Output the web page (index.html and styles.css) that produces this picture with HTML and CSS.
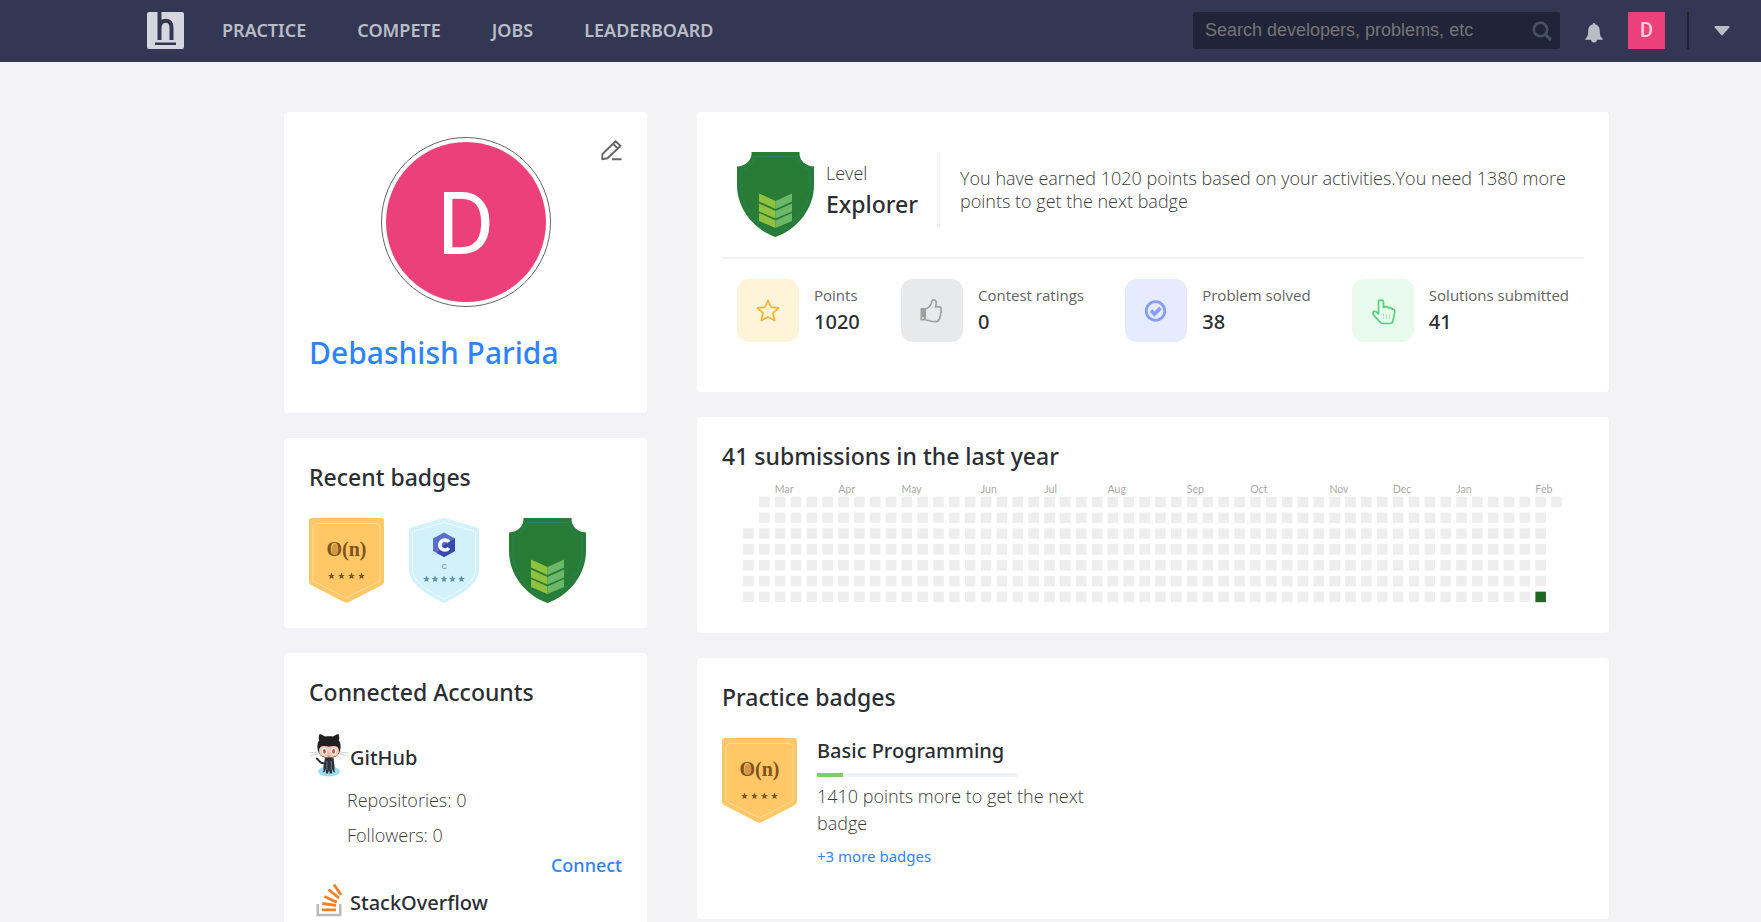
FILE: index.html
```html
<!DOCTYPE html>
<html lang="en">
<head>
<meta charset="utf-8">
<meta name="viewport" content="width=device-width, initial-scale=1">
<title>Debashish Parida | Developer profile</title>
<link rel="stylesheet" href="styles.css">
</head>
<body>
<svg class="defs" width="0" height="0" aria-hidden="true">
  <defs>
    <path id="star5" d="M0-3.4 1-1.1 3.4-1 1.5.6 2.1 3 0 1.7-2.1 3-1.5.6-3.4-1-1-1.1Z"/>
    <symbol id="badge-basic" viewBox="0 0 75 85">
      <path fill="#ffc766" d="M3 0H72Q75 0 75 3V64Q75 66 73 67L40 84Q37.500 85.500 35 84L2 67Q0 66 0 64V3Q0 0 3 0Z"/>
      <path fill="none" stroke="#ffdb9c" d="M8 5.500H67Q71 5.500 71 10V63L37.500 80 4 63V10Q4 5.500 8 5.500Z"/>
      <text x="37.500" y="38" text-anchor="middle" class="badge-serif">O(n)</text>
      <ellipse cx="26" cy="31.500" rx="3.500" ry="5.500" fill="#d6953f"/>
      <g fill="#80531e"><use href="#star5" x="22.500" y="58"/><use href="#star5" x="32.500" y="58"/><use href="#star5" x="42.500" y="58"/><use href="#star5" x="52.500" y="58"/></g>
    </symbol>
    <symbol id="badge-explorer" viewBox="0 0 77 85">
      <path fill="#287c35" d="M14.500 0H62.500C62 8 68 14 77 14.500V33C77 56 61 77 38.500 85 16 77 0 56 0 33V14.500C9 14 15 8 14.500 0Z"/>
      <path fill="none" stroke="#22855a" d="M17 4.500H60Q62 16 73 18V34C73 54 58 73 38.500 81 19 73 4 54 4 34V18Q15 16 17 4.500Z"/>
      <path fill="#91c13e" d="M22 41.500 38.500 49V57L22 49.500ZM22 51.500 38.500 59V66.500L22 59.500ZM22 61 38.500 68.500V76L22 69Z"/>
      <path fill="#6bb868" d="M55 41.500 38.500 49V57L55 49.500ZM55 51.500 38.500 59V66.500L55 59.500ZM55 61 38.500 68.500V76L55 69Z"/>
    </symbol>
  </defs>
</svg>

<header class="topbar">
  <a class="logo" href="#" aria-label="Home">
    <svg viewBox="0 0 37 37" aria-hidden="true">
      <rect width="37" height="37" rx="2" fill="#d6d7de"/>
      <path fill="none" stroke="#333754" stroke-width="4" d="M12.500 0V28M12.500 17C12.500 11 15 8.800 18.500 8.800 23 8.800 24.500 11.500 24.500 16V28"/>
      <path fill="#333754" d="M8 30.500H29V33H8Z"/>
    </svg>
  </a>
  <nav class="mainnav" aria-label="Main">
    <a href="#">PRACTICE</a>
    <a href="#">COMPETE</a>
    <a href="#">JOBS</a>
    <a href="#">LEADERBOARD</a>
  </nav>
  <form class="search" role="search">
    <input type="search" aria-label="Search" placeholder="Search developers, problems, etc">
    <button type="submit" aria-label="Submit search">
      <svg viewBox="0 0 20 20" aria-hidden="true"><circle cx="8.500" cy="8.500" r="6.700" fill="none" stroke="#475160" stroke-width="2.600"/><path d="M13.300 13.300 18 18" stroke="#475160" stroke-width="3.200" stroke-linecap="round"/></svg>
    </button>
  </form>
  <button class="bell" type="button" aria-label="Notifications">
    <svg viewBox="0 0 18 20" aria-hidden="true"><path fill="#b9bdc5" d="M9 0C9.800 0 10.300.6 10.300 1.400 13.500 2 14.800 4.800 14.800 8 14.800 12.500 15.700 14 17.800 16V16.700H.2V16C2.300 14 3.200 12.500 3.200 8 3.200 4.800 4.500 2 7.700 1.400 7.700.6 8.200 0 9 0ZM6 16.500H12C12 18.500 10.700 19.500 9 19.500 7.300 19.500 6 18.500 6 16.500Z"/></svg>
  </button>
  <a class="me" href="#" aria-label="My profile">D</a>
  <button class="more" type="button" aria-label="Account menu">
    <svg viewBox="0 0 16 10" aria-hidden="true"><path fill="#b9bdc5" d="M1 0H15Q16 .5 15.300 1.500L8.800 9Q8 9.800 7.200 9L.7 1.500Q0 .5 1 0Z"/></svg>
  </button>
</header>

<main class="page">
  <aside class="column">
    <section class="card profile">
      <button class="edit" type="button" aria-label="Edit profile">
        <svg viewBox="0 0 21 21" aria-hidden="true" fill="none" stroke="#666" stroke-width="1.900" stroke-linejoin="round"><path d="M1.200 19.200 1.500 14 14.600 1.200 19.500 6 6.500 18.300ZM12 3.700 16.800 8.500M11 19.200H20.500"/></svg>
      </button>
      <div class="avatar"><span>D</span></div>
      <h1>Debashish Parida</h1>
    </section>

    <section class="card">
      <h2>Recent badges</h2>
      <div class="badges">
        <svg class="badge" role="img" aria-label="Basic Programming badge"><use href="#badge-basic"/></svg>
        <svg class="badge badge-c" viewBox="0 0 70 85" role="img" aria-label="C badge">
          <path fill="#d2f1fa" d="M35 0 70 10V52C70 66 52 77 35 85 18 77 0 66 0 52V10Z"/>
          <path fill="none" stroke="#f1fbfe" d="M35 4.500 66.500 13.500V52C66.500 63 51 73 35 81 19 73 3.500 63 3.500 52V13.500Z"/>
          <path fill="#5a6fc9" d="M35 14.500 46 20.500V33L35 39 24 33V20.500Z"/>
          <path fill="#3549ae" d="M46 20.500V33L35 39 28 35 35 27Z"/>
          <path fill="none" stroke="#fff" stroke-width="3.600" d="M39.800 24A5 5 0 1 0 39.800 30"/>
          <text x="35" y="51" text-anchor="middle" class="badge-small">C</text>
          <g fill="#5b929d"><use href="#star5" x="17.500" y="61"/><use href="#star5" x="26" y="61"/><use href="#star5" x="35" y="61"/><use href="#star5" x="43.500" y="61"/><use href="#star5" x="52.500" y="61"/></g>
        </svg>
        <svg class="badge badge-level" role="img" aria-label="Explorer badge"><use href="#badge-explorer"/></svg>
      </div>
    </section>

    <section class="card accounts">
      <h2>Connected Accounts</h2>
      <div class="account">
        <svg class="octocat" viewBox="0 0 40 44" aria-hidden="true">
          <ellipse cx="20" cy="38.500" rx="11" ry="5" fill="#9edcf2"/>
          <path fill="none" stroke="#c9cdd0" stroke-width=".9" d="M9 19 .5 20M9 21 1 23M31 19 39.500 20M31 21 39 23"/>
          <path fill="none" stroke="#27323a" stroke-width="2" d="M16 30C10 32 10 25 7 25.500"/>
          <path fill="#2b3338" d="M16 25H24.500L25.500 33V38L26.500 39.500 24.500 39 23.500 36 23 40.500H21L20.500 37 20 41 19.500 37 19 40.500H17L16.500 36 15.500 39 13.500 39.500 14.500 38V33Z"/>
          <path stroke="#7d8a92" stroke-width=".8" d="M17.800 28V37M22.300 28V37"/>
          <path fill="#1f1f20" d="M10.500 1C13 1.500 15 3 16 3.500 18.500 3 21.500 3 24 3.500 25 3 27 1.500 29.500 1 30.500 4 30.300 6 29.800 7.500 31.500 9.500 31.800 12 31.500 15 31 22 26.500 25 20 25 13.500 25 9 22 8.500 15 8.200 12 8.500 9.500 10.200 7.500 9.700 6 9.500 4 10.500 1Z"/>
          <path fill="#f4cbb2" d="M20 13.800C25 12.500 29.800 12.500 30 18 30 23 25.500 24.300 20 24.300 14.500 24.300 10 23 10 18 10.200 12.500 15 12.500 20 13.800Z"/>
          <g fill="#fff"><ellipse cx="15.200" cy="18.200" rx="2.500" ry="3.300"/><ellipse cx="24.800" cy="18.200" rx="2.500" ry="3.300"/></g>
          <g fill="#ad5c51"><ellipse cx="15.400" cy="18.400" rx="1.500" ry="2.400"/><ellipse cx="24.600" cy="18.400" rx="1.500" ry="2.400"/></g>
          <path fill="none" stroke="#ad5c51" stroke-width=".8" d="M18.500 22.500Q20 23.700 21.500 22.500M19.600 20.500H20.400"/>
        </svg>
        <h3>GitHub</h3>
      </div>
      <div class="details">
        <p>Repositories: 0</p>
        <p>Followers: 0</p>
      </div>
      <a class="connect" href="#">Connect</a>
      <div class="account account-so">
        <svg class="stack" viewBox="0 0 26 34" aria-hidden="true" fill="none">
          <path stroke="#bcbbbb" stroke-width="2.600" d="M1.800 21V32H24.200V21"/>
          <path stroke="#f48023" stroke-width="2.800" d="M6 26.800H20M6.300 20.500 20 22.300M8.500 13.500 20.800 19.200M12.500 6.500 23 15M18 1.500 25 12"/>
        </svg>
        <h3>StackOverflow</h3>
      </div>
    </section>
  </aside>

  <div class="column">
    <section class="card summary">
      <div class="level">
        <svg class="badge badge-level" role="img" aria-label="Explorer badge"><use href="#badge-explorer"/></svg>
        <div class="level-name"><span>Level</span><strong>Explorer</strong></div>
        <p>You have earned 1020 points based on your activities.You need 1380 more points to get the next badge</p>
      </div>
      <dl class="stats">
        <div class="stat stat-points">
          <svg class="tile" viewBox="0 0 62 62" aria-hidden="true"><path fill="none" stroke="#ffb63a" stroke-width="1.800" stroke-linejoin="round" d="M31 21 34 27.700 41.500 28.500 36 33.700 37.700 41 31 37.500 24.300 41 26 33.700 20.500 28.500 28 27.700Z"/></svg>
          <dt>Points</dt><dd>1020</dd>
        </div>
        <div class="stat stat-contest">
          <svg class="tile" viewBox="0 0 62 62" aria-hidden="true"><path fill="#a0a0a0" d="M19.500 29.500Q19 29 20 28.500H25V41H20Q19 41 19.500 40Z"/><circle cx="21.800" cy="38.500" r=".9" fill="#e8e9ea"/><path fill="none" stroke="#a0a0a0" stroke-width="1.700" stroke-linejoin="round" d="M25 29.500C28 28 30.500 25 30.800 22 31 20.300 33 19.800 34.300 20.800 35.500 22 35.300 25 34.300 27.300H38.500C40.500 27.500 40.500 29.500 39.700 30.500 40.500 31.500 40.200 33 39.500 34 39.800 35.200 39.500 36.500 38.700 37.300 39 38.500 38.500 39.700 37.700 40.300 37.500 42 36 42.200 34 42.200 31 42.200 28 41 25 40.500"/></svg>
          <dt>Contest ratings</dt><dd>0</dd>
        </div>
        <div class="stat stat-solved">
          <svg class="tile" viewBox="0 0 62 62" aria-hidden="true" fill="none" stroke="#869eff"><circle cx="30.500" cy="31.500" r="9.300" stroke-width="2.800"/><path stroke-width="3.800" d="M26 31 29.500 34.500 35.500 28.500"/></svg>
          <dt>Problem solved</dt><dd>38</dd>
        </div>
        <div class="stat stat-submitted">
          <svg class="tile" viewBox="0 0 62 62" aria-hidden="true" fill="none" stroke="#4fd375" stroke-width="1.700" stroke-linejoin="round"><path d="M26.500 34.500V22.500C26.500 20 31.500 20 31.500 22.500V28C33.500 26.500 36 27.200 36.500 28.500 38.500 27.800 40 28.500 40.300 29.700 42 29.500 43 30.500 42.700 32.500 42.500 36 41.500 38 41 41 40.700 43.500 40 44 38 44H30.500C28.500 44 28 42.500 27 41.500 25 39 21 36 21 33.500 21.200 31.500 23.500 31.500 24.500 32.500Z"/><path stroke="#a9e6ba" stroke-width="1" d="M31.500 34.500V39.500M34.500 34.500V39.500M37.500 34.500V39.500"/></svg>
          <dt>Solutions submitted</dt><dd>41</dd>
        </div>
      </dl>
    </section>

    <section class="card activity">
      <h2>41 submissions in the last year</h2>
      <svg id="heatmap" viewBox="0 0 816 116" role="img" aria-label="Submission calendar"></svg>
    </section>

    <section class="card practice">
      <h2>Practice badges</h2>
      <div class="practice-item">
        <svg class="badge" role="img" aria-label="Basic Programming badge"><use href="#badge-basic"/></svg>
        <div class="practice-text">
          <h3>Basic Programming</h3>
          <div class="bar"><div class="bar-fill" style="width:13%"></div></div>
          <p>1410 points more to get the next badge</p>
          <a href="#">+3 more badges</a>
        </div>
      </div>
    </section>
  </div>
</main>
<script src="heatmap.js"></script>
</body>
</html>
```
FILE: heatmap.js
```js
(function () {
  var NS = 'http://www.w3.org/2000/svg';
  var map = document.getElementById('heatmap');
  var pitch = 15, left = 20, top = 10, weeks = 52;
  var months = {2: 'Mar', 6: 'Apr', 10: 'May', 15: 'Jun', 19: 'Jul', 23: 'Aug',
    28: 'Sep', 32: 'Oct', 37: 'Nov', 41: 'Dec', 45: 'Jan', 50: 'Feb'};

  function add(tag, attrs, text) {
    var el = document.createElementNS(NS, tag);
    Object.keys(attrs).forEach(function (k) { el.setAttribute(k, attrs[k]); });
    if (text) el.textContent = text;
    map.appendChild(el);
  }

  for (var w = 0; w < weeks; w++) {
    var x = left + w * pitch;
    if (months[w]) add('text', {x: x, y: top - 3, 'class': 'month'}, months[w]);
    for (var d = 0; d < 7; d++) {
      if ((w === 0 && d < 2) || (w === weeks - 1 && d > 0)) continue;
      add('rect', {x: x, y: top + d * pitch, width: 10, height: 10,
        'class': w === 50 && d === 6 ? 'day day-active' : 'day'});
    }
  }
})();
```
FILE: styles.css
```css
* { box-sizing: border-box; }

body {
  margin: 0;
  background: #f3f3f6;
  color: #2b2e33;
  font-family: "Noto Sans", "Open Sans", sans-serif;
  font-size: 18px;
}

h1, h2, h3, p, dl, dd { margin: 0; }
a { color: #3083ff; text-decoration: none; }
button { padding: 0; border: 0; background: none; cursor: pointer; }
svg { display: block; }
.defs { position: absolute; }

.topbar {
  display: flex;
  align-items: center;
  height: 62px;
  padding: 0 31px 1px 147px;
  background: #333754;
}
.logo, .logo svg { width: 37px; height: 37px; }
.mainnav { display: flex; gap: 51px; margin-left: 38px; padding-bottom: 2px; }
.mainnav a { color: #b9bdc5; font-weight: 600; line-height: 24px; }
.search {
  display: flex;
  align-items: center;
  width: 367px;
  height: 37px;
  margin-left: auto;
  padding: 0 8px 0 12px;
  border-radius: 2px;
  background: #212438;
}
.search input {
  flex: 1;
  min-width: 0;
  padding: 0;
  border: 0;
  outline: 0;
  background: none;
  color: #d6d7de;
  font: 18px "Liberation Sans", Arial, sans-serif;
}
.search input::placeholder { color: #757575; opacity: 1; }
.search svg { width: 20px; height: 20px; }
.bell { margin: 4px 25px 0 25px; }
.bell svg { width: 18px; height: 20px; }
.me {
  width: 37px;
  height: 37px;
  background: #ec407a;
  color: #fbd0de;
  font: 500 20px/37px Roboto, sans-serif;
  text-align: center;
}
.more {
  height: 37px;
  margin-left: 22px;
  padding-left: 25px;
  border-left: 2px solid #20232f;
}
.more svg { width: 16px; height: 10px; }

.page {
  display: grid;
  grid-template-columns: 363px minmax(0, 1fr);
  align-items: start;
  gap: 50px;
  padding: 50px 152px 0 284px;
}
.column { display: grid; gap: 25px; }
.card { padding: 25px; border-radius: 4px; background: #fff; }
h2 { font-size: 23px; font-weight: 500; line-height: 28px; }
h3 { font-size: 20px; font-weight: 500; line-height: 26px; }

.profile { position: relative; padding-bottom: 40px; }
.edit { position: absolute; top: 28px; right: 25px; }
.edit svg { width: 21px; height: 21px; }
.avatar {
  width: 170px;
  height: 170px;
  margin: 0 auto;
  padding: 4px;
  border: 1px solid #666;
  border-radius: 50%;
}
.avatar span {
  display: block;
  height: 160px;
  padding-top: 2px;
  border-radius: 50%;
  background: #ec407a;
  color: #fff;
  font: 88px/160px Roboto, sans-serif;
  text-align: center;
}
h1 {
  margin-top: 26px;
  color: #3083ff;
  font-size: 30px;
  font-weight: 500;
  line-height: 40px;
}

.badge { flex: none; width: 75px; height: 85px; }
.badge-level { width: 77px; }
.badge-c { width: 70px; margin-right: 5px; }
.badges { display: flex; gap: 25px; margin-top: 27px; }
.badge-serif { fill: #80531e; font: bold 20px "Liberation Serif", serif; }
.badge-small { fill: #5b929d; font: 8px Roboto, sans-serif; }

.accounts { padding-bottom: 60px; }
.account { display: flex; align-items: center; margin-top: 27px; }
.octocat { width: 40px; height: 44px; margin-right: 1px; }
.account h3 { padding-top: 5px; }
.details { padding: 6px 0 0 38px; color: #3c3c3c; font-family: "Open Sans", sans-serif; font-weight: 300; line-height: 35px; }
.connect { display: block; font-weight: 500; line-height: 24px; text-align: right; }
.account-so { margin-top: 6px; }
.stack { width: 26px; height: 34px; margin: 0 8px 0 7px; }

.summary { padding-top: 40px; padding-bottom: 50px; }
.level {
  display: flex;
  padding: 0 0 20px 15px;
  border-bottom: 2px solid #f0f1f5;
  color: #3c3c3c;
}
.level-name {
  display: flex;
  flex-direction: column;
  height: 75px;
  margin-left: 12px;
  padding: 8px 19px 0 0;
  border-right: 3px double #f0f0f2;
}
.level-name span { line-height: 26px; }
.level-name strong { color: #2b2e33; font-size: 23px; font-weight: 500; line-height: 36px; }
.level p { flex: 1; padding: 15px 0 0 20px; line-height: 23px; }
.level-name span, .level p { font-family: "Open Sans", sans-serif; font-weight: 300; }
.stats { display: flex; justify-content: space-between; padding: 20px 15px 0; }
.stat {
  display: grid;
  grid-template-columns: auto auto;
  grid-template-rows: 28px 25px;
  align-content: start;
  column-gap: 15px;
}
.tile { grid-row: 1 / 4; width: 62px; height: 63px; border-radius: 12px; }
.stat dt { padding-top: 5px; color: #646464; font-size: 15px; line-height: 22px; font-family: "Open Sans", sans-serif; }
.stat dd { font-size: 20px; font-weight: 500; line-height: 30px; }
.stat-points .tile { background: #fff4d8; }
.stat-contest .tile { background: #e8e9ea; }
.stat-solved .tile { background: #e6ebff; }
.stat-submitted .tile { background: #e9fbef; }

#heatmap { width: 100%; margin-top: 16px; overflow: visible; }
.activity { padding-bottom: 24px; }
.month { fill: #aaa; font: 10px Lato, sans-serif; }
.day { fill: #eee; }
.day-active { fill: #1e6823; }

.practice { padding-bottom: 51px; }
.practice-item { display: flex; gap: 20px; margin-top: 27px; }
.practice-text { width: 300px; }
.bar { width: 200px; height: 4px; margin: 9px 0 6px; background: #f0f1f5; }
.bar-fill { height: 4px; background: #82cb66; }
.practice-text p { color: #3c3c3c; font-family: "Open Sans", sans-serif; font-weight: 300; line-height: 27px; }
.practice-text a { display: block; margin-top: 7px; font-size: 15px; line-height: 24px; }
```
